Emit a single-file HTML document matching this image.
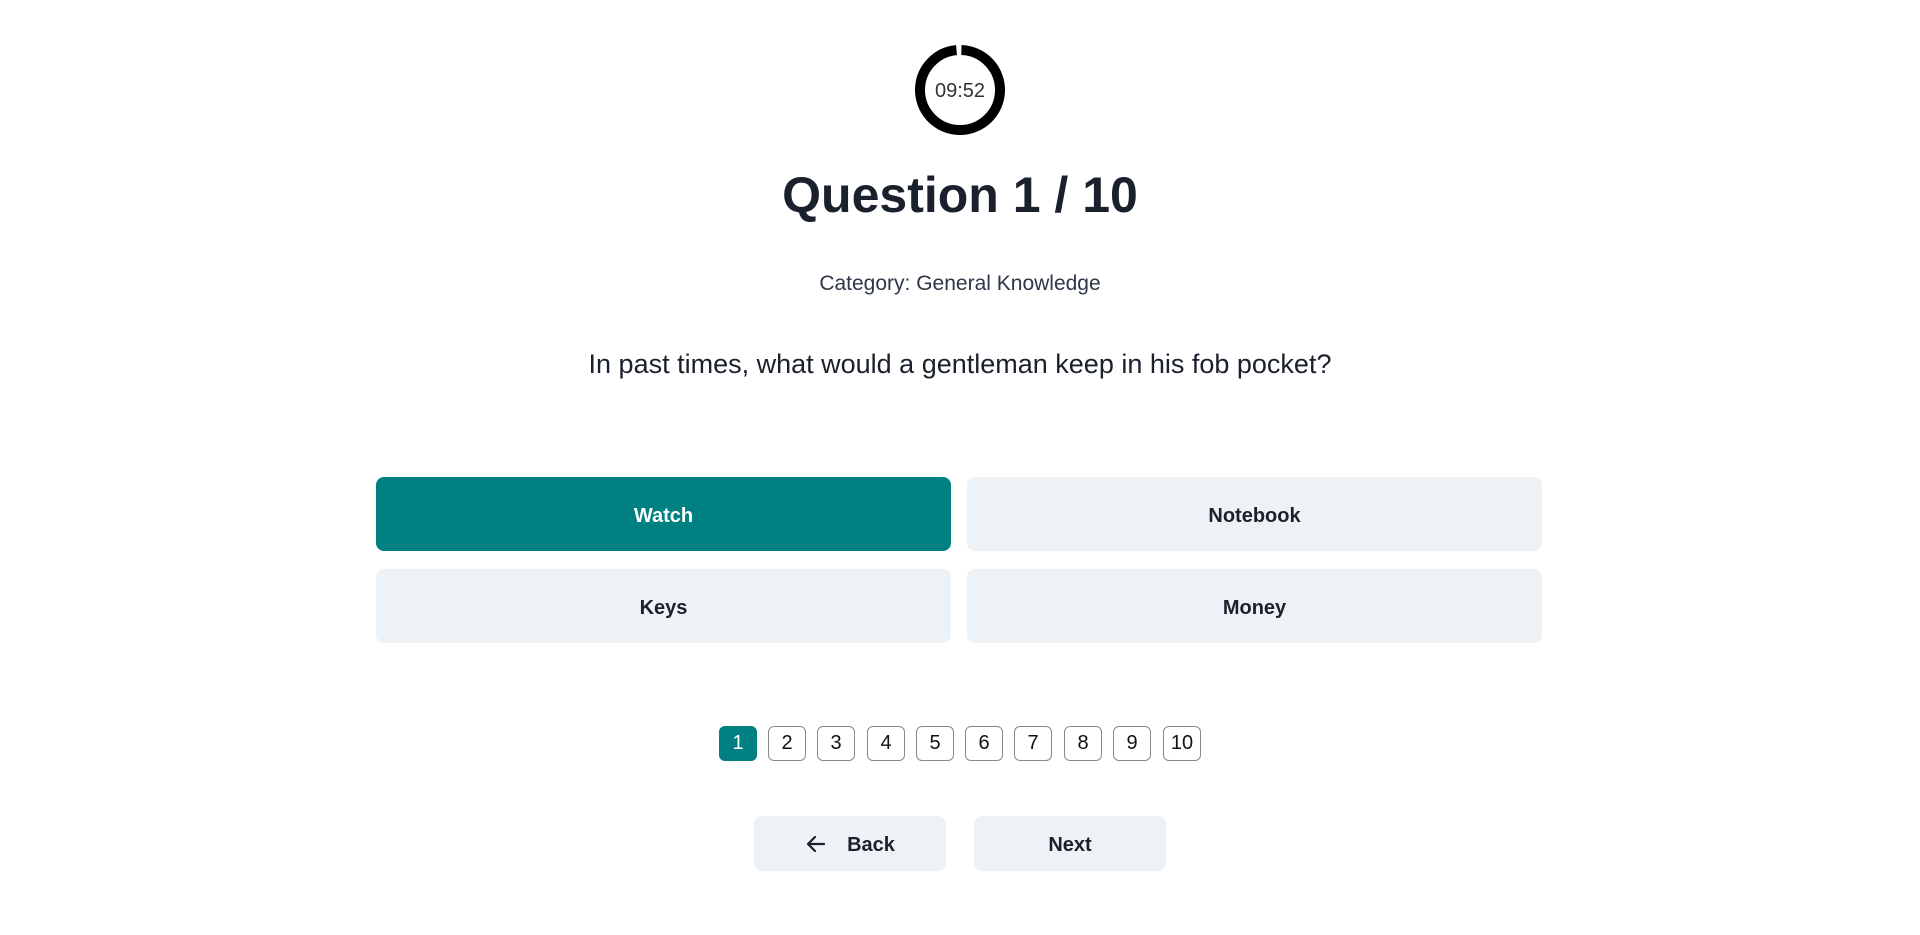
<!DOCTYPE html>
<html><head><style>
html,body{margin:0;padding:0;background:#fff;width:1920px;height:935px;overflow:hidden;font-family:"Liberation Sans",sans-serif;color:#1a202c}
.abs{position:absolute}
.c{text-align:center;left:0;width:1920px}
.opt{position:absolute;width:575px;height:74px;border-radius:8px;background:#edf2f7;display:flex;align-items:center;justify-content:center;font-weight:bold;font-size:20px;color:#1a202c;padding-top:4px;box-sizing:border-box}
.pg{position:absolute;top:726px;width:36px;height:33px;border:1px solid #888;border-radius:6px;display:flex;align-items:center;justify-content:center;font-size:20px;color:#111;background:#fff}
.nav{position:absolute;top:816px;width:192px;height:55px;border-radius:8px;background:#edf2f7;display:flex;align-items:center;justify-content:center;font-weight:bold;font-size:20px;padding-top:4px;box-sizing:border-box}
</style></head><body>
<svg class="abs" style="left:912px;top:42px" width="96" height="96" viewBox="0 0 96 96">
<circle cx="48" cy="48" r="40" fill="none" stroke="#000" stroke-width="10" stroke-dasharray="246 5.3" transform="rotate(-88 48 48)"/>
</svg>
<div class="abs c" style="top:80px;font-size:20px;color:#333">09:52</div>
<div class="abs c" style="top:166px;font-size:50px;font-weight:bold;color:#1a202c">Question 1 / 10</div>
<div class="abs c" style="top:272px;font-size:21px;color:#2d3748">Category: General Knowledge</div>
<div class="abs c" style="top:349px;font-size:27px;color:#1a202c">In past times, what would a gentleman keep in his fob pocket?</div>
<div class="opt" style="left:376px;top:477px;background:#008080;color:#fff">Watch</div>
<div class="opt" style="left:967px;top:477px">Notebook</div>
<div class="opt" style="left:376px;top:569px">Keys</div>
<div class="opt" style="left:967px;top:569px">Money</div>
<div class="pg" style="left:719px;background:#008080;color:#fff;border-color:#008080">1</div>
<div class="pg" style="left:768px">2</div>
<div class="pg" style="left:817px">3</div>
<div class="pg" style="left:867px">4</div>
<div class="pg" style="left:916px">5</div>
<div class="pg" style="left:965px">6</div>
<div class="pg" style="left:1014px">7</div>
<div class="pg" style="left:1064px">8</div>
<div class="pg" style="left:1113px">9</div>
<div class="pg" style="left:1163px">10</div>
<div class="nav" style="left:754px"><svg width="22" height="22" viewBox="0 0 22 22" style="margin-right:20px;margin-top:-4px"><path d="M19 11H3M10 4L3 11l7 7" fill="none" stroke="#1a202c" stroke-width="2.2" stroke-linecap="round" stroke-linejoin="round"/></svg>Back</div>
<div class="nav" style="left:974px">Next</div>
</body></html>
